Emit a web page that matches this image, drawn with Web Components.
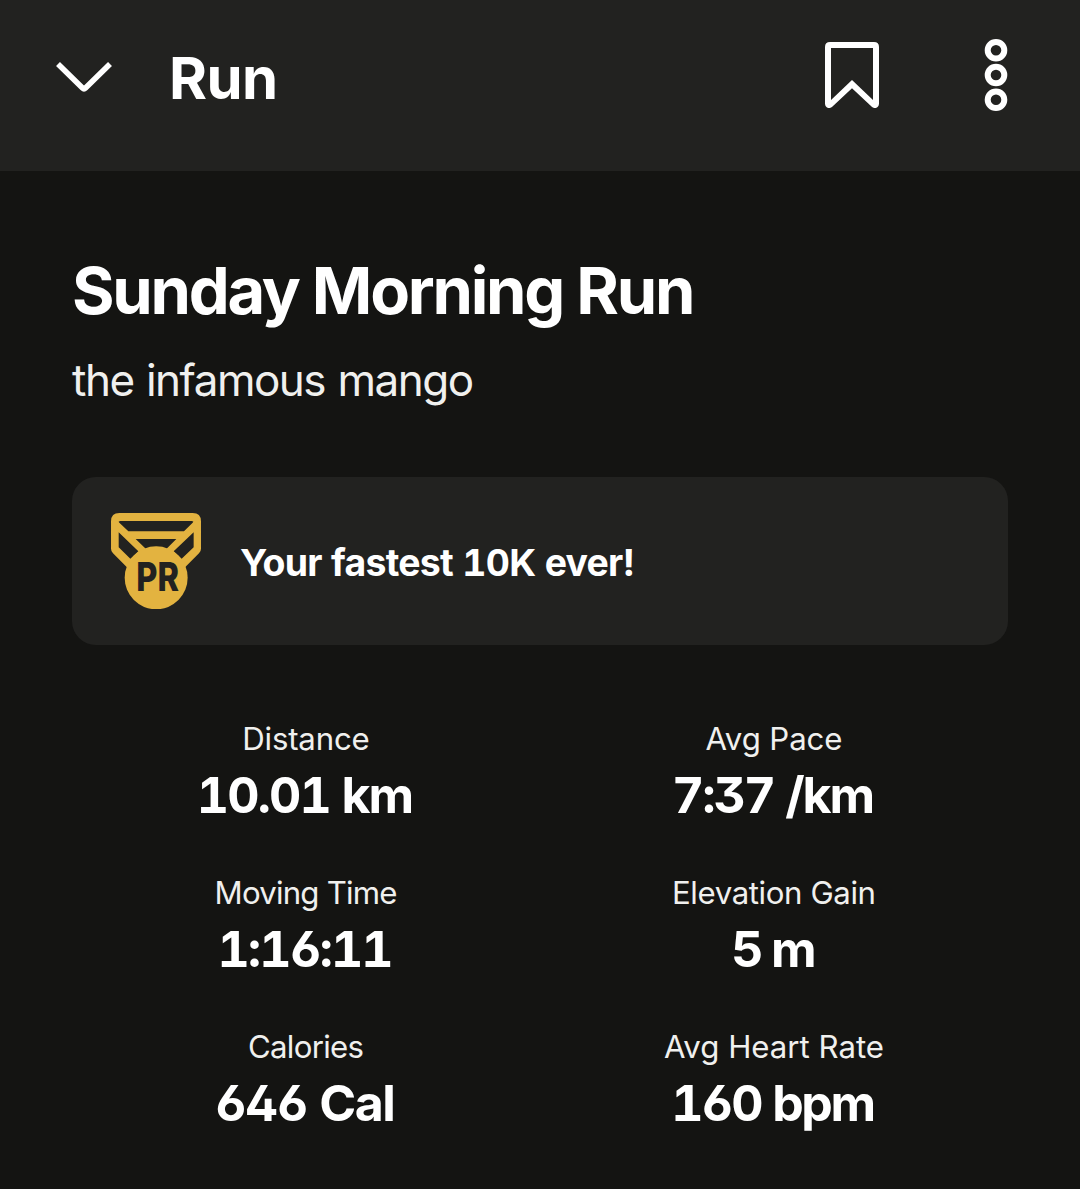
<!DOCTYPE html>
<html lang="en">
<head>
<meta charset="utf-8">
<title>Run</title>
<style>
    html, body {
        margin: 0;
        background: #141412;
    }

    body {
        font-family: Inter, Roboto, "Liberation Sans", sans-serif;
        color: #fff;
    }
</style>
</head>
<body>
<run-activity></run-activity>

<script>
const icons = {
    chevron: `<svg width="56" height="34" viewBox="56 60 56 34" fill="none" stroke="#fff" stroke-width="5.6" stroke-linejoin="round">
        <path d="M58 64L82.500 88Q84 89.500 85.500 88L110 64"/></svg>`,
    bookmark: `<svg width="54" height="66" viewBox="825 42 54 66" fill="#fff">
        <path fill-rule="evenodd" d="M830 42H874Q879 42 879 47V103.5C879 108 874.500 109.500 871.500 106.500L852 88.300L832.500 106.500C829.500 109.500 825 108 825 103.500V47Q825 42 830 42ZM831 48V100L852 80L873 100V48Z"/></svg>`,
    more: `<svg width="24" height="74" viewBox="984 38 24 74" fill="none" stroke="#fff" stroke-width="6">
        <circle cx="996" cy="50.200" r="8.300"/><circle cx="996" cy="75" r="8.300"/><circle cx="996" cy="99.800" r="8.300"/></svg>`,
    medal: `<svg width="90" height="96.300" viewBox="135 128 270 289" fill="#e3b340">
        <path fill-rule="evenodd" d="M160 128H380Q405 128 405 153V235Q405 243 399 249L358 290L270 340L182 290L141 249Q135 243 135 235V153Q135 128 160 128Z
            M163 152Q155 152 160 157L187 183H354L380 157Q385 152 377 152Z
            M158 186V231L193 265L217 243Z M383 186V231L347 265L323 243Z M209 206L240 236H301L331 206Z"/>
        <circle cx="270.500" cy="322.500" r="94.500"/>
        <text x="211" y="363" font-size="121" font-weight="800" fill="#222220" textLength="128" lengthAdjust="spacingAndGlyphs">PR</text></svg>`
};

class RunIcon extends HTMLElement {
    constructor() {
        super();
        this.attachShadow({ mode: "open" });
    }

    connectedCallback() {
        this.shadowRoot.innerHTML = `
            <style>
                :host { display: block; flex: none; }
                svg { display: block; }
            </style>
            ${icons[this.getAttribute("name")]}
        `;
    }
}

class RunHeader extends HTMLElement {
    constructor() {
        super();
        this.attachShadow({ mode: "open" });
        this.shadowRoot.innerHTML = `
            <style>
                :host {
                    display: flex;
                    align-items: center;
                    box-sizing: border-box;
                    height: 171px;
                    padding: 0 72px 21px 56px;
                    background: #222220;
                }

                .title {
                    flex: 1;
                    margin-left: 57px;
                    padding-top: 6px;
                    font-size: 58px;
                    line-height: 78px;
                    font-weight: 700;
                    letter-spacing: -.6px;
                }

                .chevron { padding-top: 4px; }
                .bookmark { margin-right: 105px; }
            </style>
            <run-icon class="chevron" name="chevron"></run-icon>
            <div class="title"><slot></slot></div>
            <run-icon class="bookmark" name="bookmark"></run-icon>
            <run-icon name="more"></run-icon>
        `;
    }
}

class RunBanner extends HTMLElement {
    constructor() {
        super();
        this.attachShadow({ mode: "open" });
        this.shadowRoot.innerHTML = `
            <style>
                :host {
                    display: flex;
                    align-items: center;
                    gap: 39px;
                    box-sizing: border-box;
                    height: 168px;
                    padding: 0 39px;
                    border-radius: 24px;
                    background: #222220;
                }

                .text {
                    padding-top: 3px;
                    font-size: 37.4px;
                    line-height: 48px;
                    font-weight: 700;
                    letter-spacing: -.73px;
                    white-space: nowrap;
                    font-feature-settings: "tnum";
                }
            </style>
            <run-icon name="medal"></run-icon>
            <div class="text"><slot></slot></div>
        `;
    }
}

class RunStat extends HTMLElement {
    constructor() {
        super();
        this.attachShadow({ mode: "open" });
        this.shadowRoot.innerHTML = `
            <style>
                :host {
                    display: flex;
                    flex-direction: column;
                    align-items: center;
                    gap: 3px;
                    white-space: nowrap;
                }

                .label {
                    margin-right: calc(var(--label-spacing, 0px) * -1);
                    padding-top: 1px;
                    color: #f0f0ee;
                    font-size: 31.2px;
                    line-height: 45px;
                    letter-spacing: var(--label-spacing, 0px);
                }

                /* tabular figures give the "1" its foot */
                .value {
                    padding-right: 3px;
                    font-size: 50px;
                    line-height: 60px;
                    font-weight: 700;
                    letter-spacing: var(--value-spacing, 0px);
                    font-feature-settings: "cv02", "cv03", "cv09", "tnum";
                }
            </style>
            <div class="label"></div>
            <div class="value"><slot></slot></div>
        `;
    }

    connectedCallback() {
        this.shadowRoot.querySelector(".label").textContent = this.getAttribute("label");
    }
}

class RunActivity extends HTMLElement {
    constructor() {
        super();
        this.attachShadow({ mode: "open" });
        this.shadowRoot.innerHTML = `
            <style>
                :host {
                    display: block;
                    height: 1189px;
                    overflow: hidden;
                    background: #141412;
                }

                main { padding: 81px 72px 0; }

                h1 {
                    margin: 0 0 20px;
                    font-size: 65px;
                    line-height: 78px;
                    font-weight: 700;
                    letter-spacing: -2.25px;
                    white-space: nowrap;
                }

                p {
                    margin: 0 0 67px;
                    color: #f0f0ee;
                    font-size: 44px;
                    line-height: 60px;
                    letter-spacing: -1.5px;
                    word-spacing: 1.5px;
                }

                .stats {
                    display: grid;
                    grid-template-columns: 1fr 1fr;
                    row-gap: 45px;
                    margin-top: 71px;
                }

                run-stat { --value-spacing: -2.1px; }
                .distance { --label-spacing: -.2px; --value-spacing: -1.9px; }
                .pace { --label-spacing: -.1px; }
                .time { --label-spacing: -.8px; }
                .elevation { --label-spacing: -.4px; --value-spacing: -3px; }
                .calories { --label-spacing: -.7px; --value-spacing: -1.5px; }
                .heart { --value-spacing: -2.4px; }
            </style>
            <run-header>Run</run-header>
            <main>
                <h1>Sunday Morning Run</h1>
                <p>the infamous mango</p>
                <run-banner>Your fastest 10K ever!</run-banner>
                <div class="stats">
                    <run-stat class="distance" label="Distance">10.01 km</run-stat>
                    <run-stat class="pace" label="Avg Pace">7:37 /km</run-stat>
                    <run-stat class="time" label="Moving Time">1:16:11</run-stat>
                    <run-stat class="elevation" label="Elevation Gain">5 m</run-stat>
                    <run-stat class="calories" label="Calories">646 Cal</run-stat>
                    <run-stat class="heart" label="Avg Heart Rate">160 bpm</run-stat>
                </div>
            </main>
        `;
    }
}

customElements.define("run-icon", RunIcon);
customElements.define("run-header", RunHeader);
customElements.define("run-banner", RunBanner);
customElements.define("run-stat", RunStat);
customElements.define("run-activity", RunActivity);
</script>
</body>
</html>
